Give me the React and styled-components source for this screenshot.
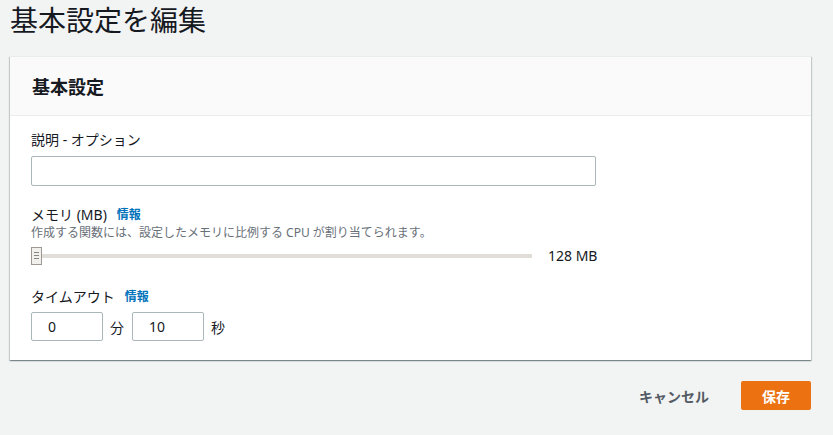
import React from "react";
import styled, { createGlobalStyle } from "styled-components";

const GlobalStyle = createGlobalStyle`
  body {
    margin: 0;
    background: #f2f3f3;
    font-family: "Noto Sans", "Noto Sans CJK JP", sans-serif;
    color: #16191f;
  }
`;

const Page = styled.div`
  display: flex;
  flex-direction: column;
  padding: 0 22px 0 10px;
`;

const Title = styled.h1`
  margin: 0;
  font-size: 28px;
  font-weight: 400;
  line-height: 40px;
  color: #16191f;
`;

const Card = styled.div`
  margin-top: 16px;
  background: #fff;
  border-top: 1px solid #eaeded;
  box-shadow: 0 1px 1px 0 rgba(0, 28, 36, 0.3), 1px 1px 1px 0 rgba(0, 28, 36, 0.15),
    -1px 1px 1px 0 rgba(0, 28, 36, 0.15);
`;

const CardHeader = styled.div`
  height: 58px;
  display: flex;
  align-items: center;
  padding: 0 22px;
  background: #fafafa;
  border-bottom: 1px solid #eaeded;
  font-size: 18px;
  font-weight: 700;
`;

const CardBody = styled.div`
  display: flex;
  flex-direction: column;
  padding: 14px 21px 19px;
`;

const Field = styled.div`
  display: flex;
  flex-direction: column;
  margin-top: ${(p) => p.$top || 0}px;
`;

const Label = styled.div`
  display: flex;
  align-items: center;
  gap: 10px;
  font-size: 14px;
  line-height: 20px;
  color: #16191f;
`;

const InfoLink = styled.a`
  font-size: 12px;
  font-weight: 700;
  color: #0073bb;
  text-decoration: none;
`;

const Hint = styled.div`
  font-size: 12px;
  line-height: 16px;
  color: #687078;
`;

const TextInput = styled.input`
  box-sizing: border-box;
  width: ${(p) => p.$width}px;
  height: ${(p) => p.$height}px;
  margin-top: ${(p) => p.$top || 0}px;
  padding: 0 12px 0 16px;
  border: 1px solid #aab7b8;
  border-radius: 2px;
  background: #fff;
  font-family: inherit;
  font-size: 14px;
  color: #16191f;
  outline: none;
`;

const SliderRow = styled.div`
  display: flex;
  align-items: center;
  gap: 16px;
  margin-top: 5px;
  font-size: 14px;
`;

const Slider = styled.div`
  width: 501px;
  height: 18px;
  display: flex;
  align-items: center;
`;

const Thumb = styled.div`
  box-sizing: border-box;
  width: 11px;
  height: 18px;
  border: 1px solid #9d9892;
  background: #f2f0ed;
  display: flex;
  flex-direction: column;
  align-items: center;
  justify-content: center;
  gap: 2px;

  span {
    width: 5px;
    height: 1px;
    background: #8a857f;
  }
`;

const Track = styled.div`
  flex: 1;
  height: 4px;
  background: #e1ded9;
`;

const TimeRow = styled.div`
  display: flex;
  align-items: center;
  gap: 7px;
  margin-top: 5px;
  font-size: 14px;
`;

const Unit = styled.span`
  margin-right: 1px;
`;

const Footer = styled.div`
  display: flex;
  justify-content: flex-end;
  align-items: center;
  gap: 32px;
  margin-top: 21px;
`;

const CancelButton = styled.button`
  border: none;
  background: none;
  padding: 0;
  font-family: inherit;
  font-size: 14px;
  font-weight: 700;
  color: #545b64;
  cursor: pointer;
`;

const PrimaryButton = styled.button`
  width: 70px;
  height: 29px;
  border: none;
  border-radius: 2px;
  background: #ec7211;
  color: #fff;
  font-family: inherit;
  font-size: 14px;
  font-weight: 700;
  cursor: pointer;
`;

export default function App() {
  return (
    <Page>
      <GlobalStyle />
      <Title>基本設定を編集</Title>
      <Card>
        <CardHeader>基本設定</CardHeader>
        <CardBody>
          <Field>
            <Label>説明 - オプション</Label>
            <TextInput $width={565} $height={30} $top={6} />
          </Field>
          <Field $top={19}>
            <Label>
              メモリ (MB) <InfoLink href="#">情報</InfoLink>
            </Label>
            <Hint>作成する関数には、設定したメモリに比例する CPU が割り当てられます。</Hint>
            <SliderRow>
              <Slider>
                <Thumb>
                  <span />
                  <span />
                  <span />
                </Thumb>
                <Track />
              </Slider>
              128 MB
            </SliderRow>
          </Field>
          <Field $top={22}>
            <Label>
              タイムアウト <InfoLink href="#">情報</InfoLink>
            </Label>
            <TimeRow>
              <TextInput $width={72} $height={29} defaultValue="0" />
              <Unit>分</Unit>
              <TextInput $width={72} $height={29} defaultValue="10" />
              <Unit>秒</Unit>
            </TimeRow>
          </Field>
        </CardBody>
      </Card>
      <Footer>
        <CancelButton>キャンセル</CancelButton>
        <PrimaryButton>保存</PrimaryButton>
      </Footer>
    </Page>
  );
}
